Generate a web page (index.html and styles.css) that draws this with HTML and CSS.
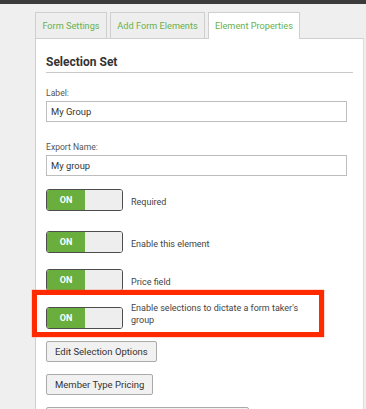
FILE: index.html
```html
<!DOCTYPE html>
<html lang="en">
  <head>
    <meta charset="UTF-8">
    <title>Element Properties</title>
    <meta name="viewport" content="width=device-width, initial-scale=1">
    <link rel="stylesheet" href="styles.css">
  </head>
  <body>
    <div class="topbar"></div>
    <div class="builder">
      <ul class="tabs">
        <li class="tab tab-settings">Form Settings</li>
        <li class="tab tab-add">Add Form Elements</li>
        <li class="tab tab-props active">Element Properties</li>
      </ul>
      <div class="panel">
        <h2 class="panel-title">Selection Set</h2>

        <div class="field">
          <label for="label">Label:</label>
          <input type="text" id="label" value="My Group">
        </div>
        <div class="field last">
          <label for="export">Export Name:</label>
          <input type="text" id="export" value="My group">
        </div>

        <div class="switch-row first">
          <div class="switch"><span class="switch-on">ON</span><span class="switch-off"></span></div>
          <span class="switch-label">Required</span>
        </div>
        <div class="switch-row">
          <div class="switch"><span class="switch-on">ON</span><span class="switch-off"></span></div>
          <span class="switch-label">Enable this element</span>
        </div>
        <div class="switch-row">
          <div class="switch"><span class="switch-on">ON</span><span class="switch-off"></span></div>
          <span class="switch-label">Price field</span>
        </div>
        <div class="switch-row highlighted">
          <div class="switch"><span class="switch-on">ON</span><span class="switch-off"></span></div>
          <span class="switch-label wrap">Enable selections to dictate a form taker's group</span>
          <div class="callout"></div>
        </div>

        <button class="btn">Edit Selection Options</button>
        <button class="btn">Member Type Pricing</button>
        <button class="btn wide">Conditional Display Settings</button>
      </div>
    </div>
  </body>
</html>
```

FILE: styles.css
```css
body {
  margin: 0;
  background: #efefef;
  font-family: Roboto, "Liberation Sans", sans-serif;
  color: #444;
  overflow: hidden;
}

.topbar {
  height: 4px;
  background: #3b3b3b;
}

.builder {
  margin: 8px 2px 0 35px;
}

.tabs {
  display: flex;
  gap: 3px;
  list-style: none;
  margin: 0;
  padding: 0;
}

.tab {
  box-sizing: border-box;
  height: 26px;
  line-height: 26px;
  border: 1px solid #cfcfcf;
  border-bottom: none;
  background: #eeeeee;
  color: #6ab04c;
  font-size: 9.2px;
  text-align: center;
  white-space: nowrap;
}

.tab-settings { width: 72px; }
.tab-add { width: 95px; }
.tab-props { width: 92px; }

.tab.active {
  position: relative;
  background: #fff;
  margin-bottom: -1px;
  height: 27px;
  line-height: 25px;
  z-index: 1;
}

.panel {
  background: #fff;
  border: 1px solid #cfcfcf;
  border-right-color: #dcdcdc;
  padding: 16px 10px 40px 10px;
  min-height: 400px;
}

.panel-title {
  margin: 0 0 15px;
  padding-bottom: 3px;
  border-bottom: 1px solid #c8c8c8;
  font-size: 12px;
  font-weight: bold;
  color: #333;
}

.field {
  margin-bottom: 20px;
}

.field.last {
  margin-bottom: 13px;
}

.field label {
  display: block;
  font-size: 8.6px;
  line-height: 10px;
  color: #555;
  margin-bottom: 3px;
}

.field input {
  display: block;
  box-sizing: border-box;
  width: 301px;
  height: 21px;
  padding: 0 4px;
  border: 1px solid #bdbdbd;
  font-family: inherit;
  font-size: 9.4px;
  color: #333;
}

.switch-row {
  display: flex;
  align-items: center;
  margin-bottom: 16px;
}

.switch-row.first {
  margin-bottom: 20px;
}

.switch {
  display: flex;
  box-sizing: border-box;
  width: 77px;
  height: 22px;
  border: 1px solid #4d4d4d;
  border-radius: 3px;
  overflow: hidden;
  flex-shrink: 0;
}

.switch-on {
  width: 38px;
  background: #6aaf3d;
  color: #fff;
  font-size: 9px;
  font-weight: bold;
  line-height: 20px;
  text-align: center;
}

.switch-off {
  flex: 1;
  background: #eeeeee;
}

.switch-label {
  margin-left: 8px;
  font-size: 9px;
  padding-top: 3px;
}

.switch-label.wrap {
  align-self: flex-start;
  width: 175px;
  line-height: 11.5px;
  padding-top: 0;
  margin-top: -4px;
}

.highlighted {
  position: relative;
  margin-bottom: 12px;
}

.callout {
  position: absolute;
  left: -14px;
  top: -17px;
  width: 292px;
  height: 47px;
  box-sizing: border-box;
  border: 5px solid #ff2a00;
  box-shadow: 0 0 1px #ff2a00;
}

.btn {
  display: block;
  height: 21px;
  padding: 0 8px;
  margin-bottom: 12px;
  background: #f1f1f1;
  border: 1px solid #aaa;
  border-radius: 2px;
  font-family: inherit;
  font-size: 9.5px;
  color: #333;
}

.btn.wide {
  width: 203px;
}
```
